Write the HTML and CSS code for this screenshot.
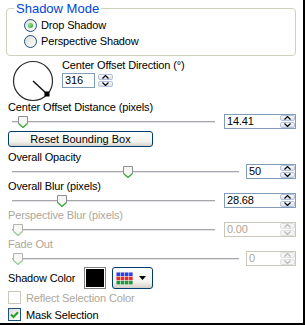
FILE: index.html
```html
<!doctype html>
<html lang="en">
<head>
<meta charset="UTF-8">
<title>Drop Shadow</title>
<link rel="stylesheet" href="styles.css">
</head>
<body>
<div class="panel">
	<fieldset class="group">
		<legend>Shadow Mode</legend>
		<label class="opt"><span class="radio checked"></span>Drop Shadow</label>
		<label class="opt"><span class="radio"></span>Perspective Shadow</label>
	</fieldset>

	<div class="direction">
		<svg class="dial" width="46" height="44" viewBox="0 0 46 44">
			<circle cx="23" cy="22" r="19.5" fill="none" stroke="#2b2b2b" stroke-width="1.2" />
			<line x1="23" y1="22" x2="37" y2="35" stroke="#1a1a1a" stroke-width="1.6" />
			<rect x="34.5" y="32.5" width="5" height="5" fill="#000" />
		</svg>
		<div class="dir-ctl">
			<div class="label">Center Offset Direction (°)</div>
			<div class="split">
				<span class="spin small"><span class="val">316</span></span>
				<span class="updown">
					<b class="ud"><svg width="7" height="4"><path d="M0.5 3.5 L3.5 0.5 L6.5 3.5" /></svg></b>
					<b class="ud"><svg width="7" height="4"><path d="M0.5 0.5 L3.5 3.5 L6.5 0.5" /></svg></b>
				</span>
			</div>
		</div>
	</div>

	<div class="setting">
		<div class="slide long">
			<div class="label">Center Offset Distance (pixels)</div>
			<div class="track"><span class="thumb" style="left: 6px"><svg width="10" height="12"><path class="tb" d="M0.5 0.5 H9.5 V7.5 L5 11.5 L0.5 7.5 Z" /><path class="tg" d="M0.5 7.5 L5 11.5 L9.5 7.5" /></svg></span></div>
		</div>
		<div class="spin wide">
			<span class="val">14.41</span>
			<span class="updown">
				<b class="ud"><svg width="7" height="4"><path d="M0.5 3.5 L3.5 0.5 L6.5 3.5" /></svg></b>
				<b class="ud"><svg width="7" height="4"><path d="M0.5 0.5 L3.5 3.5 L6.5 0.5" /></svg></b>
			</span>
		</div>
	</div>

	<button class="xpbtn reset">Reset Bounding Box</button>

	<div class="setting">
		<div class="slide short">
			<div class="label">Overall Opacity</div>
			<div class="track"><span class="thumb" style="left: 111px"><svg width="10" height="12"><path class="tb" d="M0.5 0.5 H9.5 V7.5 L5 11.5 L0.5 7.5 Z" /><path class="tg" d="M0.5 7.5 L5 11.5 L9.5 7.5" /></svg></span></div>
		</div>
		<div class="spin narrow">
			<span class="val">50</span>
			<span class="updown">
				<b class="ud"><svg width="7" height="4"><path d="M0.5 3.5 L3.5 0.5 L6.5 3.5" /></svg></b>
				<b class="ud"><svg width="7" height="4"><path d="M0.5 0.5 L3.5 3.5 L6.5 0.5" /></svg></b>
			</span>
		</div>
	</div>

	<div class="setting">
		<div class="slide long">
			<div class="label">Overall Blur (pixels)</div>
			<div class="track"><span class="thumb" style="left: 45px"><svg width="10" height="12"><path class="tb" d="M0.5 0.5 H9.5 V7.5 L5 11.5 L0.5 7.5 Z" /><path class="tg" d="M0.5 7.5 L5 11.5 L9.5 7.5" /></svg></span></div>
		</div>
		<div class="spin wide">
			<span class="val">28.68</span>
			<span class="updown">
				<b class="ud"><svg width="7" height="4"><path d="M0.5 3.5 L3.5 0.5 L6.5 3.5" /></svg></b>
				<b class="ud"><svg width="7" height="4"><path d="M0.5 0.5 L3.5 3.5 L6.5 0.5" /></svg></b>
			</span>
		</div>
	</div>

	<div class="setting off">
		<div class="slide long">
			<div class="label">Perspective Blur (pixels)</div>
			<div class="track"><span class="thumb" style="left: 1px"><svg width="10" height="12"><path class="tb" d="M0.5 0.5 H9.5 V7.5 L5 11.5 L0.5 7.5 Z" /><path class="tg" d="M0.5 7.5 L5 11.5 L9.5 7.5" /></svg></span></div>
		</div>
		<div class="spin wide">
			<span class="val">0.00</span>
			<span class="updown">
				<b class="ud"><svg width="7" height="4"><path d="M0.5 3.5 L3.5 0.5 L6.5 3.5" /></svg></b>
				<b class="ud"><svg width="7" height="4"><path d="M0.5 0.5 L3.5 3.5 L6.5 0.5" /></svg></b>
			</span>
		</div>
	</div>

	<div class="setting off">
		<div class="slide short">
			<div class="label">Fade Out</div>
			<div class="track"><span class="thumb" style="left: 1px"><svg width="10" height="12"><path class="tb" d="M0.5 0.5 H9.5 V7.5 L5 11.5 L0.5 7.5 Z" /><path class="tg" d="M0.5 7.5 L5 11.5 L9.5 7.5" /></svg></span></div>
		</div>
		<div class="spin narrow">
			<span class="val">0</span>
			<span class="updown">
				<b class="ud"><svg width="7" height="4"><path d="M0.5 3.5 L3.5 0.5 L6.5 3.5" /></svg></b>
				<b class="ud"><svg width="7" height="4"><path d="M0.5 0.5 L3.5 3.5 L6.5 0.5" /></svg></b>
			</span>
		</div>
	</div>

	<div class="color-row">
		<span class="color-label">Shadow Color</span>
		<span class="swatch"></span>
		<button class="xpbtn palette">
			<svg width="17" height="13" viewBox="0 0 17 13">
				<rect x="0" y="0" width="17" height="13" fill="#e8e8e8" />
				<rect x="0.5" y="0.5" width="3.5" height="3.5" fill="#2d3cf0" /><rect x="4.7" y="0.5" width="3.5" height="3.5" fill="#2d3cf0" /><rect x="8.9" y="0.5" width="3.5" height="3.5" fill="#2d3cf0" /><rect x="13.1" y="0.5" width="3.5" height="3.5" fill="#2d3cf0" />
				<rect x="0.5" y="4.7" width="3.5" height="3.5" fill="#e82a2a" /><rect x="4.7" y="4.7" width="3.5" height="3.5" fill="#e82a2a" /><rect x="8.9" y="4.7" width="3.5" height="3.5" fill="#e82a2a" /><rect x="13.1" y="4.7" width="3.5" height="3.5" fill="#e82a2a" />
				<rect x="0.5" y="8.9" width="3.5" height="3.5" fill="#1f9a3a" /><rect x="4.7" y="8.9" width="3.5" height="3.5" fill="#1f9a3a" /><rect x="8.9" y="8.9" width="3.5" height="3.5" fill="#1f9a3a" /><rect x="13.1" y="8.9" width="3.5" height="3.5" fill="#1f9a3a" />
			</svg>
			<svg class="caret" width="7" height="4" viewBox="0 0 7 4"><path d="M0 0 H7 L3.5 4 Z" fill="#000" /></svg>
		</button>
	</div>

	<label class="check off"><span class="box"></span>Reflect Selection Color</label>
	<label class="check"><span class="box on"><svg width="9" height="8" viewBox="0 0 9 8"><path d="M1 3.5 L3.5 6 L8 1.2" fill="none" stroke="#21a121" stroke-width="2" /></svg></span>Mask Selection</label>
</div>
</body>
</html>
```

FILE: styles.css
```css
body {
	margin: 0;
	background: #fff;
	color: #000;
	font-family: "Liberation Sans", Arial, sans-serif;
	font-size: 11px;
	letter-spacing: -0.15px;
}

.panel {
	width: 305px;
	height: 325px;
	box-sizing: border-box;
	border-right: 2px solid #000;
	border-bottom: 2px solid #000;
	padding-top: 1px;
}

/* group box */
fieldset.group {
	margin: 0 7px 0 6px;
	padding: 1px 0 6px 7px;
	border: 1px solid #d0d0bf;
	border-radius: 4px;
}

fieldset.group legend {
	padding: 0 2px;
	line-height: 15px;
	font-size: 13px;
	letter-spacing: 0;
	color: #0046d5;
}

label.opt {
	display: flex;
	align-items: center;
	height: 16px;
	margin-left: 10px;
}

.radio {
	width: 11px;
	height: 11px;
	margin-right: 4px;
	border: 1px solid #1c5180;
	border-radius: 50%;
	background: linear-gradient(135deg, #dcdcd7, #fff);
	display: flex;
	align-items: center;
	justify-content: center;
}

.radio.checked::after {
	content: "";
	width: 5px;
	height: 5px;
	border-radius: 50%;
	background: radial-gradient(circle at 35% 35%, #8ee08e, #21a121);
}

/* direction */
.direction {
	display: flex;
	margin-top: 3px;
	height: 42px;
}

.dial {
	margin-left: 10px;
}

.dir-ctl {
	margin-left: 6px;
}

.label {
	line-height: 13px;
	white-space: nowrap;
}

.split {
	display: flex;
	align-items: center;
	margin-top: 1px;
	gap: 3px;
}

/* spin boxes */
.spin {
	display: flex;
	align-items: center;
	height: 15px;
	box-sizing: border-box;
	border: 1px solid #7f9db9;
	background: #fff;
	padding-left: 2px;
}

.spin.small {
	width: 33px;
}

.spin.wide {
	width: 72px;
}

.spin.narrow {
	width: 50px;
}

.spin .val {
	flex: 1;
	line-height: 13px;
}

.updown {
	display: flex;
	flex-direction: column;
	gap: 1px;
}

.ud {
	width: 15px;
	height: 6px;
	box-sizing: border-box;
	border: 1px solid #b4c1d8;
	border-radius: 2px;
	background: linear-gradient(#fbfcfe, #d9e0ec);
	display: flex;
	align-items: center;
	justify-content: center;
}

.ud svg path {
	fill: none;
	stroke: #000;
	stroke-width: 1.2;
}

/* sliders */
.setting {
	display: flex;
	align-items: flex-end;
	padding: 0 7px 0 8px;
	height: 29px;
}

.slide.long {
	width: 207px;
}

.slide.short {
	width: 231px;
}

.track {
	position: relative;
	height: 16px;
	margin-left: 4px;
	background: linear-gradient(to bottom, transparent 7px, #a7a6aa 7px, #a7a6aa 8px, #e4e3e8 8px, #e4e3e8 9px, transparent 9px);
}

.thumb {
	position: absolute;
	top: 2px;
	line-height: 0;
}

.thumb .tb {
	fill: #f6f6f3;
	stroke: #8a8e96;
}

.thumb .tg {
	fill: none;
	stroke: #3fab3f;
	stroke-width: 1.2;
}

.setting .spin {
	margin-left: auto;
	margin-bottom: 1px;
}

.setting.off .label,
.setting.off .val {
	color: #aca899;
}

.setting.off .spin {
	border-color: #c9c7ba;
}

.setting.off .ud {
	border-color: #e0e0e0;
	background: #f4f4f4;
}

.setting.off .ud svg path {
	stroke: #b8b8b8;
}

.setting.off .thumb .tb {
	stroke: #b4b4b4;
}

.setting.off .thumb .tg {
	stroke: #9ccf9c;
}

/* buttons */
.xpbtn {
	font: inherit;
	color: #000;
	border: 1px solid #003c74;
	border-radius: 3px;
	background: linear-gradient(#fefefe, #f2f2ee 70%, #d6d0c5);
	padding: 0;
}

.reset {
	display: block;
	width: 145px;
	height: 16px;
	margin: 1px 0 4px 8px;
	line-height: 14px;
}

.color-row {
	display: flex;
	align-items: center;
	height: 22px;
	padding-left: 8px;
}

.color-label {
	width: 76px;
}

.swatch {
	width: 20px;
	height: 20px;
	border: 1px solid #808080;
	box-shadow: inset 0 0 0 1px #fff;
	background: #000;
}

.palette {
	margin-left: 6px;
	width: 41px;
	height: 22px;
	display: flex;
	align-items: center;
	padding-left: 3px;
	gap: 6px;
}

/* check boxes */
label.check {
	display: flex;
	align-items: center;
	height: 17px;
	padding-left: 8px;
}

.box {
	width: 11px;
	height: 11px;
	margin-right: 5px;
	border: 1px solid #1c5180;
	background: linear-gradient(135deg, #dcdcd7, #fff);
	display: flex;
	align-items: center;
	justify-content: center;
}

label.check.off {
	color: #aca899;
}

label.check.off .box {
	border-color: #cac8bb;
	background: #fff;
}
```
